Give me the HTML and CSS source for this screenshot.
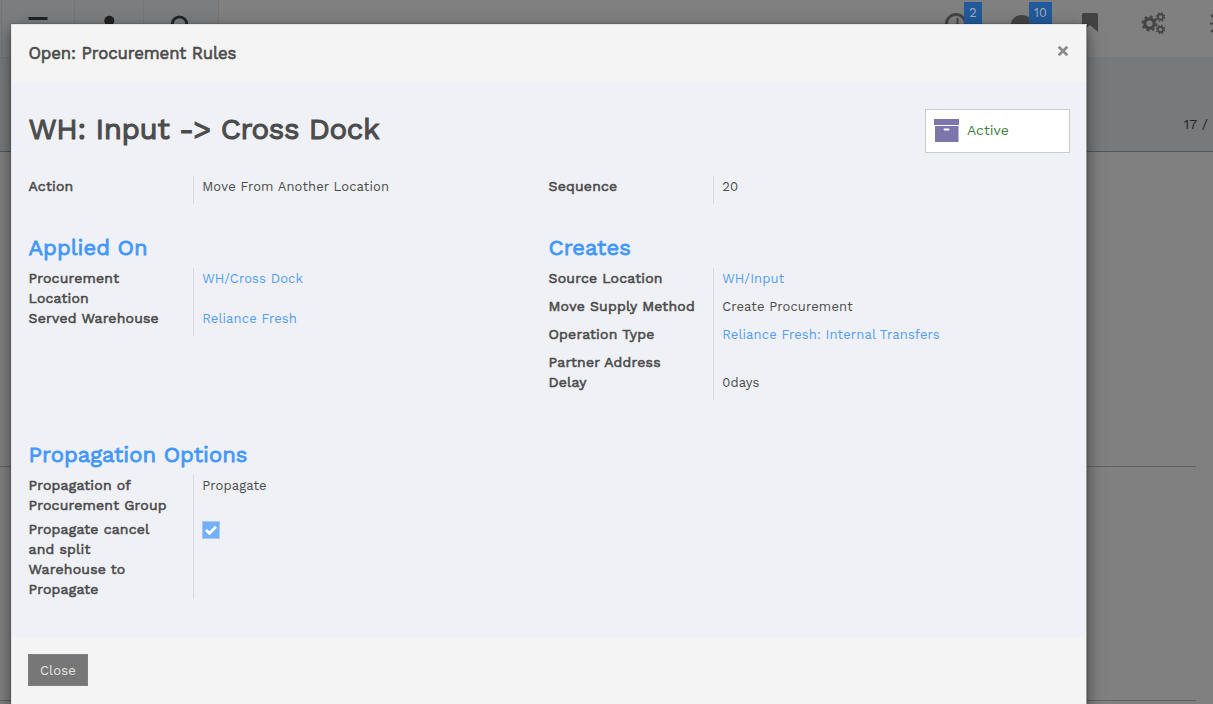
FILE: index.html
```html
<!DOCTYPE html>
<html lang="en">
<head>
<meta charset="utf-8">
<title>Procurement Rules</title>
<link rel="stylesheet" href="styles.css">
</head>
<body>
<div class="backdrop-page">
  <header class="topbar">
    <nav class="topbar-nav">
      <span class="nav-cell"><svg width="20" height="18" viewBox="0 0 20 18"><path d="M.5 2h19v3H.5zM.5 9h19v3H.500zM.5 16h19v3H.5z" fill="#222"/></svg></span>
      <span class="nav-cell nav-user"><svg width="20" height="18" viewBox="0 0 20 18"><circle cx="10.300" cy="5.800" r="5" fill="#222"/><path d="M1 18q0-7 9-7t9 7z" fill="#222"/></svg></span>
      <span class="nav-cell nav-search"><svg width="20" height="20" viewBox="0 0 20 20"><circle cx="8.500" cy="9" r="7.200" fill="none" stroke="#222" stroke-width="2.800"/></svg></span>
    </nav>
    <svg class="tray" width="290" height="58" viewBox="923 0 290 58">
      <g fill="none" stroke="#444"><circle cx="956" cy="24" r="9.500" stroke-width="3"/><path d="M957.500 18v7h-5" stroke-width="2"/></g>
      <ellipse cx="1022" cy="24" rx="11" ry="9" fill="#444"/>
      <path d="M1082 14.500q0-1.500 1.500-1.500h13q1.500 0 1.500 1.500V32l-8-7-8 7z" fill="#444"/>
      <g fill="none" stroke="#444">
        <circle cx="1149.500" cy="23.500" r="4.700" stroke-width="3.200"/><circle cx="1149.500" cy="23.500" r="7" stroke-width="2" stroke-dasharray="2.900 2.600"/>
        <circle cx="1160.500" cy="17" r="2.600" stroke-width="1.700"/><circle cx="1160.500" cy="17" r="4" stroke-width="1.400" stroke-dasharray="1.700 1.450"/>
        <circle cx="1160.500" cy="29.500" r="2.600" stroke-width="1.700"/><circle cx="1160.500" cy="29.500" r="4" stroke-width="1.400" stroke-dasharray="1.700 1.450"/>
      </g>
      <path d="M1211 15l2 2M1210 23.500h3M1211 32l2-2" fill="none" stroke="#444" stroke-width="2"/>
    </svg>
    <span class="badge badge-clock">2</span>
    <span class="badge badge-chat">10</span>
  </header>
  <div class="control-panel"><span class="pager">17 /</span></div>
  <div class="sheet"><div class="sheet-row first"></div><div class="sheet-row"></div></div>
</div>
<div class="modal">
  <div class="modal-header"><h4 class="modal-title">Open: Procurement Rules</h4>
    <svg class="close-x" width="12" height="12" viewBox="0 0 12 12"><path d="M1.700 1.700l8.600 8.600M10.300 1.700l-8.600 8.600" stroke="#8b8b8b" stroke-width="2.700"/></svg></div>
  <div class="modal-body">
    <div class="title-row">
      <h1 class="record-name">WH: Input -&gt; Cross Dock</h1>
      <div class="stat"><svg width="26" height="24" viewBox="0 0 26 24"><path d="M0 0h25v6H0zM1 7h23.500v16H1z" fill="#7c76ac"/><rect x="9.500" y="9.500" width="6" height="2" rx="1" fill="#fff"/></svg><span class="stat-label">Active</span></div>
    </div>
    <div class="groups top">
      <div class="fields"><div class="row"><b>Action</b><span class="v">Move From Another Location</span></div></div>
      <div class="fields"><div class="row"><b>Sequence</b><span class="v">20</span></div></div>
    </div>
    <div class="groups middle">
      <section><h2>Applied On</h2><div class="fields">
        <div class="row double"><b>Procurement<br>Location</b><a class="v">WH/Cross Dock</a></div>
        <div class="row"><b>Served Warehouse</b><a class="v">Reliance Fresh</a></div></div></section>
      <section><h2>Creates</h2><div class="fields">
        <div class="row"><b>Source Location</b><a class="v">WH/Input</a></div>
        <div class="row"><b>Move Supply Method</b><span class="v">Create Procurement</span></div>
        <div class="row"><b>Operation Type</b><a class="v">Reliance Fresh: Internal Transfers</a></div>
        <div class="row tight"><b>Partner Address</b><span class="v"></span></div>
        <div class="row"><b>Delay</b><span class="v">0days</span></div></div></section>
    </div>
    <div class="groups">
      <section><h2>Propagation Options</h2><div class="fields">
        <div class="row mid"><b>Propagation of<br>Procurement Group</b><span class="v">Propagate</span></div>
        <div class="row double"><b>Propagate cancel<br>and split</b><span class="v"><svg class="check" width="18" height="18" viewBox="0 0 18 18"><rect x=".5" y=".5" width="17" height="17" fill="#72b0f9" stroke="#a9c9ef"/><path d="M4 9l3.500 3.300L14 5.800" fill="none" stroke="#fff" stroke-width="2.800"/></svg></span></div>
        <div class="row double"><b>Warehouse to<br>Propagate</b><span class="v"></span></div></div></section>
    </div>
  </div>
  <div class="modal-footer"><button class="btn">Close</button></div>
</div>
</body>
</html>
```
FILE: styles.css
```css
* { box-sizing: border-box; }
body { margin: 0; width: 1213px; height: 704px; overflow: hidden; background: #808080; color: #4c4c4c; font-family: "Work Sans", Inter, "Noto Sans", sans-serif; font-size: 13px; line-height: 20px; letter-spacing: .14px; }
h1, h2, h4 { margin: 0; font-weight: 400; }
.backdrop-page { height: 704px; }
.topbar { position: relative; height: 58px; display: flex; justify-content: space-between; background: #808080; border-bottom: 1px solid #747474; }
.topbar-nav { display: flex; padding-left: 1px; background: #7b7d7f; }
.nav-cell { width: 73px; padding: 15px 0 0 26px; border-left: 1px solid #727476; }
.nav-user { width: 69px; padding: 15px 0 0 24px; }
.nav-search { width: 76px; padding: 15px 0 0 27px; border-right: 1px solid #727476; }
.badge { position: absolute; top: 2px; height: 22px; background: #22599a; color: #a5aeb9; font-size: 12.500px; line-height: 21px; text-align: center; }
.badge-clock { left: 964px; width: 18px; }
.badge-chat { left: 1029px; width: 23px; }
.control-panel { height: 94px; padding: 56px 5px 0 0; text-align: right; background: #77797b; border-bottom: 1px solid #53585d; color: #252525; }
.pager { font-size: 14px; }
.sheet { padding-right: 17px; }
.sheet-row { height: 234px; border-bottom: 1px solid #626262; }
.sheet-row.first { height: 315px; }
.modal { position: absolute; left: 11px; top: 24px; width: 1076px; height: 700px; background: #f4f4f4; border: 1px solid; border-color: #e2e2e2 #999 #999 #e8e8e8; box-shadow: 0 5px 15px rgba(0,0,0,.5), 0 0 1px rgba(0,0,0,.6); }
.modal-header { display: flex; justify-content: space-between; height: 57px; padding: 18px 17px 0 16.500px; }
.modal-title { font-size: 16.800px; line-height: 21px; letter-spacing: -.11px; -webkit-text-stroke: .65px; }
.close-x { margin-top: 2px; }
.modal-body { height: 555px; padding: 27px 16px 0 16.500px; background: #f0f1f6; }
.title-row { display: flex; justify-content: space-between; height: 67px; }
.record-name { font-size: 29.400px; line-height: 40px; letter-spacing: -.37px; -webkit-text-stroke: 1.150px; }
.stat { display: flex; gap: 7px; width: 145px; height: 44px; padding: 9px 8px; background: #fff; border: 1px solid #ccc; }
.stat-label { color: #408040; font-size: 14px; line-height: 23px; letter-spacing: 0; }
.groups { display: grid; grid-template-columns: 520px 520px; }
.groups.top { height: 59px; }
.groups.middle { height: 207px; }
h2 { font-size: 22px; line-height: 25px; margin-bottom: 8px; color: #4298fb; letter-spacing: .05px; -webkit-text-stroke: .85px; }
.row { display: grid; grid-template-columns: 164.500px 1fr; grid-template-rows: 100%; height: 28px; line-height: 22px; }
.row.tight { height: 20px; }
.row.double { height: 40px; }
.row.mid { height: 44px; }
.row b { font-size: 14px; line-height: 20px; font-weight: 400; letter-spacing: .22px; -webkit-text-stroke: .6px; }
.v { padding-left: 8.200px; border-left: 1px solid #d9dadf; }
a.v { color: #539df5; }
.check { display: block; margin: 2px 0 0; }
.modal-footer { padding: 17px 16px; }
.btn { display: block; width: 60px; height: 32px; padding: 1px 0 0; border: 1px solid #7f7f7f; background: #777; color: #e4e4e4; font: 13px "Work Sans", Inter, sans-serif; letter-spacing: .2px; }
```
